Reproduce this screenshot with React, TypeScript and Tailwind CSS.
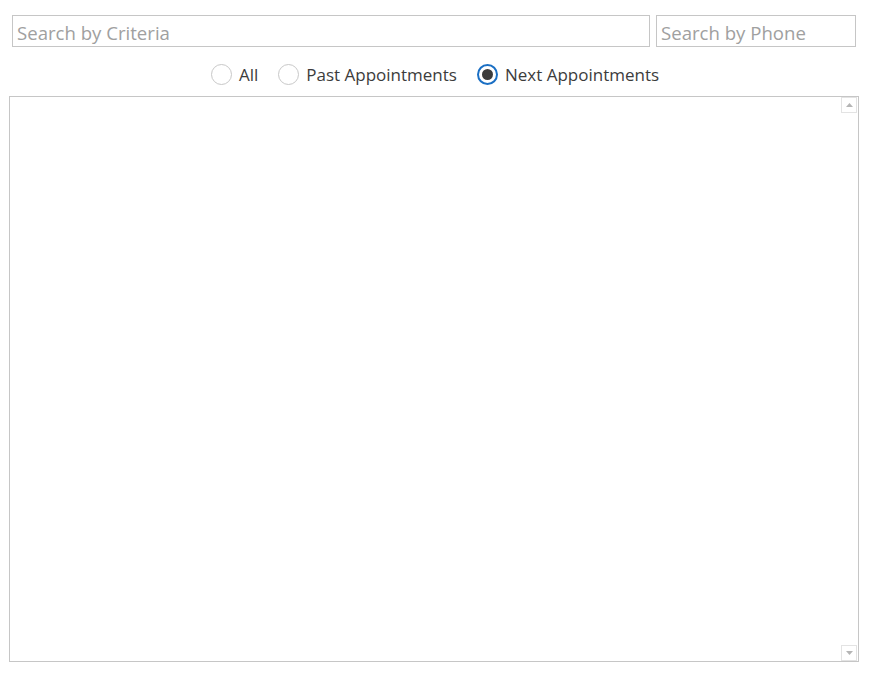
import { useState } from 'react';

const options = ['All', 'Past Appointments', 'Next Appointments'];

function Radio({ label, checked, onSelect }: { label: string; checked: boolean; onSelect: () => void }) {
  return (
    <label className="flex items-center gap-[7px] cursor-pointer" onClick={onSelect}>
      {checked ? (
        <span className="w-[21px] h-[21px] rounded-full border-2 border-[#1a6fc4] flex items-center justify-center">
          <span className="w-[11px] h-[11px] rounded-full bg-[#3c3c3c]" />
        </span>
      ) : (
        <span className="w-[21px] h-[21px] rounded-full border border-[#c8c8c8]" />
      )}
      <span className="text-[17px] text-[#3c3c3c] leading-none">{label}</span>
    </label>
  );
}

export default function App() {
  const [selected, setSelected] = useState('Next Appointments');

  return (
    <div
      className="w-[870px] h-[673px] bg-white"
      style={{ fontFamily: '"Open Sans", "Noto Sans", sans-serif' }}
    >
      <div className="flex gap-[6px] pt-[15px] pl-[12px]">
        <input
          className="w-[638px] h-[32px] border border-[#c6c6c6] px-[4px] pt-[3px] text-[18.6px] text-[#333] placeholder-[#a0a0a0] outline-none"
          placeholder="Search by Criteria"
        />
        <input
          className="w-[200px] h-[32px] border border-[#c6c6c6] px-[4px] pt-[3px] text-[18.6px] text-[#333] placeholder-[#a0a0a0] outline-none"
          placeholder="Search by Phone"
        />
      </div>
      <div className="flex justify-center items-center gap-[20px] h-[49px] pt-[5px]">
        {options.map((o) => (
          <Radio key={o} label={o} checked={selected === o} onSelect={() => setSelected(o)} />
        ))}
      </div>
      <div className="ml-[9px] w-[850px] h-[566px] border border-[#c6c6c6] flex justify-end">
        <div className="w-[17px] flex flex-col justify-between">
          <div className="w-[16px] h-[16px] border border-[#e3e3e3] flex items-center justify-center">
            <svg width="7" height="4" viewBox="0 0 7 4">
              <path d="M3.5 0 L7 4 L0 4 Z" fill="#b5b5b5" />
            </svg>
          </div>
          <div className="w-[16px] h-[16px] border border-[#e3e3e3] flex items-center justify-center">
            <svg width="7" height="4" viewBox="0 0 7 4">
              <path d="M0 0 L7 0 L3.5 4 Z" fill="#b5b5b5" />
            </svg>
          </div>
        </div>
      </div>
    </div>
  );
}
